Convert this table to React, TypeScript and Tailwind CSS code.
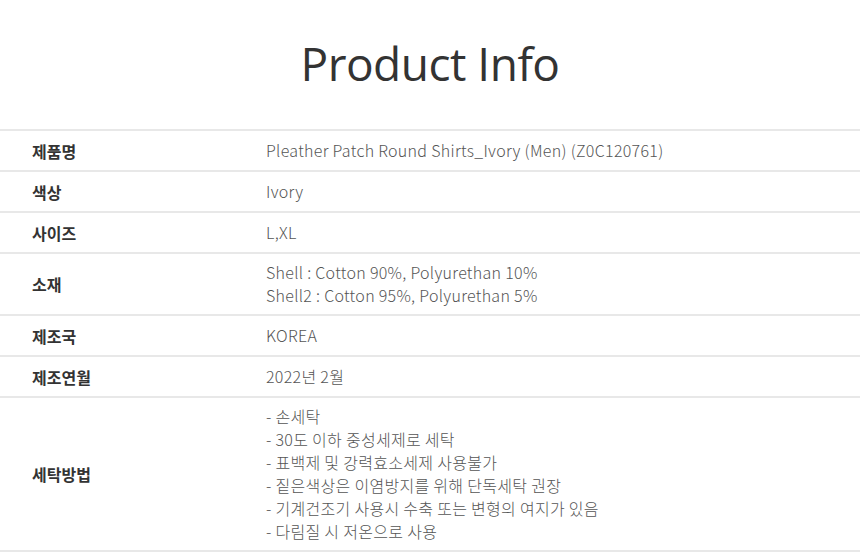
import React from "react";

interface InfoRow {
  label: string;
  values: string[];
}

const rows: InfoRow[] = [
  { label: "제품명", values: ["Pleather Patch Round Shirts_Ivory (Men) (Z0C120761)"] },
  { label: "색상", values: ["Ivory"] },
  { label: "사이즈", values: ["L,XL"] },
  {
    label: "소재",
    values: ["Shell : Cotton 90%, Polyurethan 10%", "Shell2 : Cotton 95%, Polyurethan 5%"],
  },
  { label: "제조국", values: ["KOREA"] },
  { label: "제조연월", values: ["2022년 2월"] },
  {
    label: "세탁방법",
    values: [
      "- 손세탁",
      "- 30도 이하 중성세제로 세탁",
      "- 표백제 및 강력효소세제 사용불가",
      "- 짙은색상은 이염방지를 위해 단독세탁 권장",
      "- 기계건조기 사용시 수축 또는 변형의 여지가 있음",
      "- 다림질 시 저온으로 사용",
    ],
  },
];

export default function App() {
  return (
    <div className="w-[860px] h-[553px] bg-white overflow-hidden">
      <div className="h-[129px] flex items-center justify-center">
        <h1 className="text-[46px] text-[#333] font-['Open_Sans',sans-serif] font-normal tracking-[-0.5px] pb-[2px]">
          Product Info
        </h1>
      </div>
      <div className="border-t-2 border-[#e8e8e8] font-['Noto_Sans_CJK_KR','Noto_Sans',sans-serif]">
        {rows.map((row) => (
          <div
            key={row.label}
            className="grid grid-cols-[266px_1fr] items-center border-b-2 border-[#e8e8e8] min-h-[41px] py-[7px]"
          >
            <div className="pl-[32px] text-[16px] font-bold text-[#333]">{row.label}</div>
            <div className="text-[16px] leading-[23px] tracking-[0.3px] text-[#555] font-light">
              {row.values.map((v) => (
                <div key={v}>{v}</div>
              ))}
            </div>
          </div>
        ))}
      </div>
    </div>
  );
}
